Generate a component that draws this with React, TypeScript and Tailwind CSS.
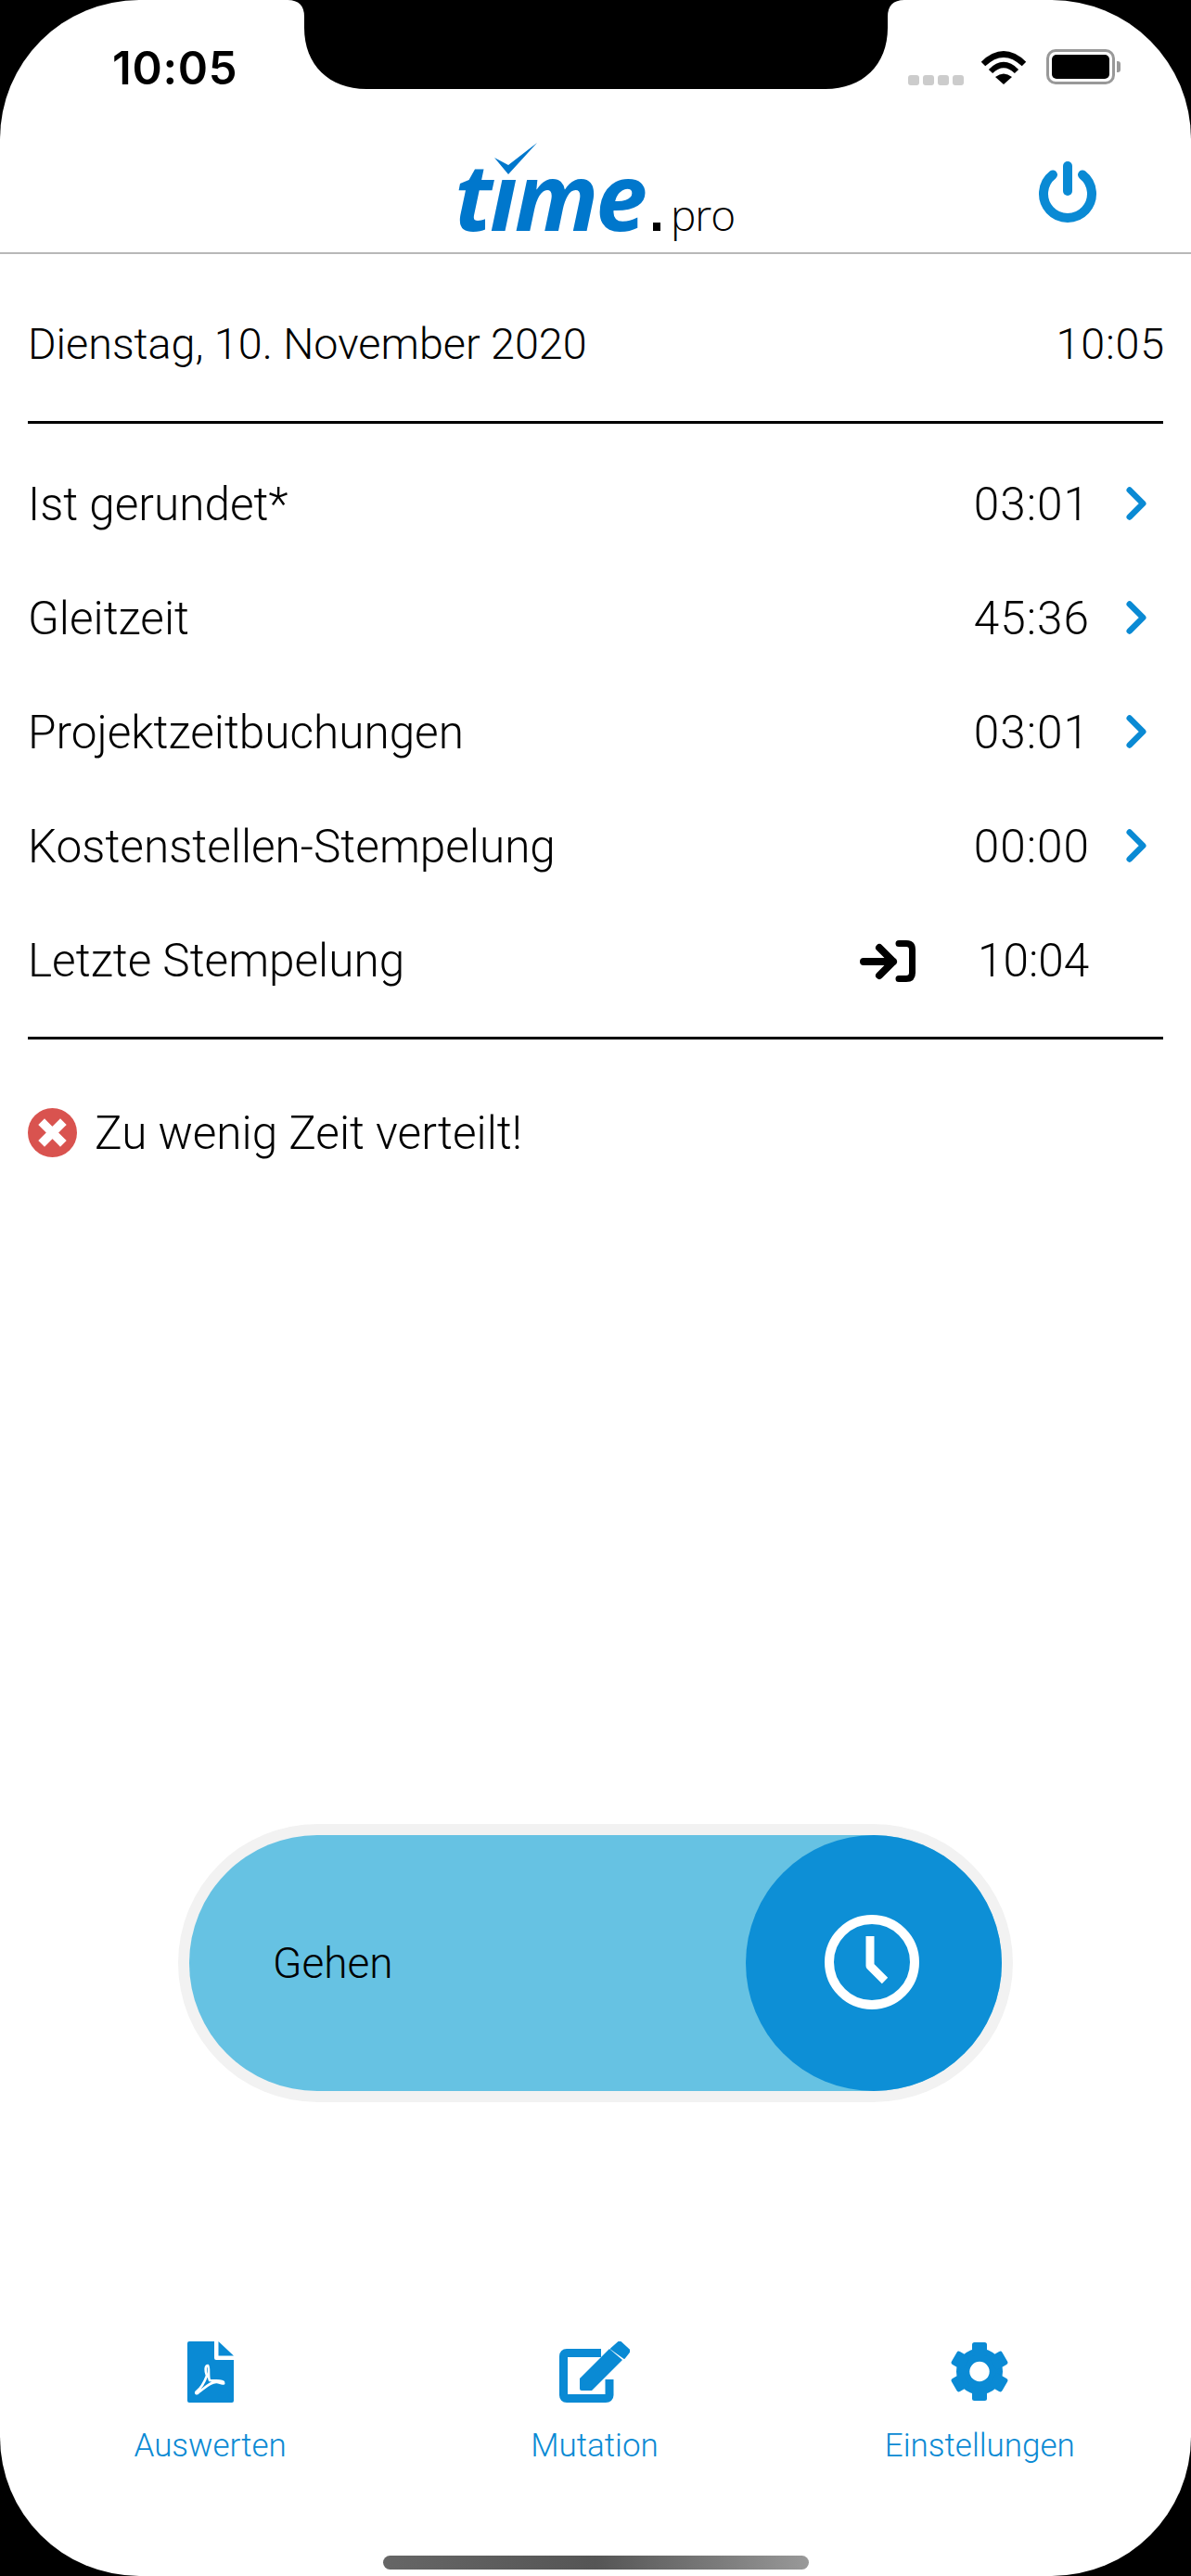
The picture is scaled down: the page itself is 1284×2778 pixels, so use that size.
import React from 'react';
import { ChevronRight } from 'lucide-react';

const rows = [
  { label: 'Ist gerundet*', value: '03:01' },
  { label: 'Gleitzeit', value: '45:36' },
  { label: 'Projektzeitbuchungen', value: '03:01' },
  { label: 'Kostenstellen-Stempelung', value: '00:00' },
];

const StatusBar: React.FC = () => (
  <div className="relative h-[96px] shrink-0">
    <span className="absolute left-[121px] top-[44px] font-['Inter'] text-[49px] leading-[60px] font-semibold tracking-[0.7px] text-black">10:05</span>
    {/* notch */}
    <svg className="absolute left-[310px] top-0" width="665" height="96" viewBox="0 0 665 96">
      <path d="M0 0 Q18 0 18 18 V30 C18 70 45 96 85 96 H580 C620 96 647 70 647 30 V18 Q647 0 665 0 Z" fill="#000" />
    </svg>
    <div className="absolute left-[979px] top-[81px] flex gap-[4px]">
      {[0, 1, 2, 3].map((i) => (
        <div key={i} className="h-[11px] w-[12px] rounded-[3px] bg-[#cccccc]" />
      ))}
    </div>
    <svg className="absolute left-[1057px] top-[54px]" width="50" height="37" viewBox="0 0 50 37">
      <path d="M3 15 Q25 -6 47 15" fill="none" stroke="#000" strokeWidth="6.5" />
      <path d="M11 23 Q25 9 39 23" fill="none" stroke="#000" strokeWidth="6" />
      <path d="M16 29 Q25 22 34 29 L25 37 Z" fill="#000" />
    </svg>
    <div className="absolute left-[1128px] top-[53px] flex items-center">
      <div className="h-[38px] w-[74px] rounded-[10px] border-[3px] border-[#999999] p-[3px]">
        <div className="h-full w-full rounded-[5px] bg-black" />
      </div>
      <div className="ml-[2px] h-[12px] w-[4px] rounded-r-[3px] bg-[#999999]" />
    </div>
  </div>
);

const Header: React.FC = () => (
  <div className="relative h-[178px] shrink-0 border-b-2 border-[#b8b8b8]">
    <div className="absolute left-[490px] top-[59px] flex items-baseline">
      <span className="font-['Open_Sans'] text-[100px] leading-[110px] font-bold italic tracking-[-3px] text-[#0077cc]">tıme</span>
      <span className="ml-[9px] h-[9px] w-[8px] bg-black" />
      <span className="ml-[11px] font-['Open_Sans'] text-[46px] leading-[50px] font-light tracking-[-1px] text-black">pro</span>
    </div>
    <svg className="absolute left-[533px] top-[58px]" width="46" height="35" viewBox="0 0 46 35">
      <path d="M46 0 L15 34 L0 16 L15 24 Z" fill="#0077cc" />
    </svg>
    <svg className="absolute left-[1119px] top-[78px]" width="64" height="66" viewBox="0 0 64 66">
      <path d="M16 14.5 A26 26 0 1 0 48 14.5" fill="none" stroke="#0a8ad4" strokeWidth="10" strokeLinecap="round" />
      <path d="M32 5 V32" fill="none" stroke="#0a8ad4" strokeWidth="10" strokeLinecap="round" />
    </svg>
  </div>
);

const PdfIcon: React.FC = () => (
  <svg width="50" height="66" viewBox="12 15 50 66">
    <path d="M12 17 Q12 15 14 15 H41 V33 Q41 35 43 35 H62 V79 Q62 81 60 81 H14 Q12 81 12 79 Z" fill="#0a8ad4" />
    <path d="M45.5 15 L62 30.5 H45.5 Z" fill="#0a8ad4" />
    <path
      d="M34 41 C31 41 31 47 33 52 C30 60 26 66 22 69 C20 71 22 72 24 70 C30 66 37 58 44 59 C50 60 52 62 51 59 C50 56 40 58 36 57 C34 53 36 42 34 41 Z"
      fill="none"
      stroke="#fff"
      strokeWidth="2.6"
    />
  </svg>
);

const EditIcon: React.FC = () => (
  <svg className="-ml-[2px]" width="76" height="66" viewBox="12 15 76 66">
    <path d="M57 27.5 H20 Q16.5 27.5 16.5 31 V73 Q16.5 76.5 20 76.5 H62 Q66 76.5 66 73 V56" fill="none" stroke="#0a8ad4" strokeWidth="9" />
    <path d="M34 55 L66 23 L80 35 L47 68 H36 Q34 68 34 66 Z" fill="#0a8ad4" />
    <path d="M77 15 L88 25 L82 33 L68 23 Z" fill="#0a8ad4" stroke="#0a8ad4" strokeWidth="2" strokeLinejoin="round" />
  </svg>
);

const GearIcon: React.FC = () => (
  <svg className="-ml-[2px]" width="64" height="66" viewBox="18 15 64 66">
    <circle cx="50" cy="47.5" r="25" fill="#0a8ad4" />
    {[0, 60, 120, 180, 240, 300].map((deg) => (
      <rect key={deg} x="42" y="16" width="16" height="15" rx="2.5" fill="#0a8ad4" transform={`rotate(${deg} 50 47.5)`} />
    ))}
    <circle cx="50" cy="47.5" r="10.7" fill="#fff" />
  </svg>
);

const App: React.FC = () => {
  return (
    <div className="h-[2778px] w-[1284px] overflow-hidden bg-black">
      <div className="flex h-full flex-col rounded-[150px] bg-white font-['Roboto'] font-light text-black">
        <StatusBar />
        <Header />

        <div className="px-[30px]">
          <div className="flex h-[183px] items-center justify-between border-b-[3px] border-black pt-[14px] text-[46.7px]">
            <span>Dienstag, 10. November 2020</span>
            <span className="mr-[-2px] tracking-[0.8px]">10:05</span>
          </div>

          <div className="border-b-[3px] border-black pt-[26px] pb-[20px] text-[49.5px]">
            {rows.map((row) => (
              <div key={row.label} className="flex h-[123px] items-center">
                <span className="flex-1">{row.label}</span>
                <span className="w-[130px] text-right tracking-[1px]">{row.value}</span>
                <ChevronRight className="-mt-[4px] ml-[21px] h-[58px] w-[58px] text-[#0a8ad4]" strokeWidth={2.7} />
              </div>
            ))}
            <div className="flex h-[123px] items-center pr-[80px]">
              <span className="flex-1">Letzte Stempelung</span>
              <svg width="60" height="45" viewBox="0 0 60 45">
                <path d="M4 23 H36 M21 8 L36 23 L21 38" fill="none" stroke="#000" strokeWidth="8" strokeLinecap="round" strokeLinejoin="round" />
                <path d="M42 3.5 H50 Q56.5 3.5 56.5 10 V35 Q56.5 41.5 50 41.5 H42" fill="none" stroke="#000" strokeWidth="7" strokeLinecap="round" />
              </svg>
              <span className="ml-[67px] w-[120px] text-right">10:04</span>
            </div>
          </div>

          <div className="mt-[64px] flex items-center gap-[19px] text-[49.5px]">
            <svg className="-mt-[2px]" width="53" height="53" viewBox="0 0 53 53">
              <circle cx="26.5" cy="26.5" r="26.5" fill="#d9534f" />
              <path d="M18 18 L35 35 M35 18 L18 35" fill="none" stroke="#fff" strokeWidth="9.5" strokeLinecap="square" />
            </svg>
            <span>Zu wenig Zeit verteilt!</span>
          </div>
        </div>

        <div className="mx-[192px] mt-[708px] flex h-[300px] rounded-full bg-[#f2f2f2] p-[12px]">
          <div className="flex flex-1 items-center justify-between rounded-full bg-[#66c2e3]">
            <span className="ml-[90px] text-[46px] font-light">Gehen</span>
            <div className="flex h-[276px] w-[276px] items-center justify-center rounded-full bg-[#0d8fd6] pr-[4px] pb-[2px]">
              <svg width="104" height="104" viewBox="0 0 104 104">
                <circle cx="52" cy="52" r="46" fill="none" stroke="#fff" strokeWidth="10" />
                <path d="M50 24 V56 L66 72" fill="none" stroke="#fff" strokeWidth="9" strokeLinejoin="round" />
              </svg>
            </div>
          </div>
        </div>

        <div className="mt-[258px] grid grid-cols-3 px-[19px] text-[35px] text-[#0a8ad4]">
          <div className="flex flex-col items-center gap-[22px]">
            <PdfIcon />
            <span className="leading-[50px]">Auswerten</span>
          </div>
          <div className="flex flex-col items-center gap-[22px]">
            <EditIcon />
            <span className="-ml-[2px] leading-[50px]">Mutation</span>
          </div>
          <div className="flex flex-col items-center gap-[22px]">
            <GearIcon />
            <span className="-ml-[2px] leading-[50px]">Einstellungen</span>
          </div>
        </div>

        <div className="mx-auto mt-[93px] h-[15px] w-[459px] rounded-[8px] bg-gradient-to-r from-[#666666] via-[#555555] to-[#999999]" />
      </div>
    </div>
  );
};

export default App;
